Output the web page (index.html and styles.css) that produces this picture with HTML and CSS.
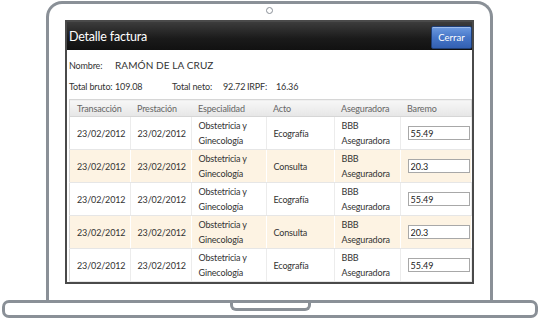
FILE: index.html
```html
<!DOCTYPE html>
<html lang="es">
<head>
  <meta charset="UTF-8" />
  <title>Detalle factura</title>
  <link rel="stylesheet" href="styles.css">
</head>
<body>

<div class="laptop">
  <div class="lid">
    <div class="camera"></div>
    <div class="screen">
      <header class="bar">
        <h1>Detalle factura</h1>
        <button class="close-btn">Cerrar</button>
      </header>

      <div class="content">
        <div class="info">
          <span class="label w44">Nombre:</span><span class="name">RAMÓN DE LA CRUZ</span>
        </div>
        <div class="info">
          <span class="label w44">Total bruto:</span><span class="w59">109.08</span>
          <span class="label w51">Total neto:</span><span class="w24">92.72</span>
          <span class="label w29">IRPF:</span><span>16.36</span>
        </div>

        <table class="grid">
          <thead>
            <tr>
              <th class="c1">Transacción</th>
              <th class="c2">Prestación</th>
              <th class="c3">Especialidad</th>
              <th class="c4">Acto</th>
              <th class="c5">Aseguradora</th>
              <th class="c6">Baremo</th>
            </tr>
          </thead>
          <tbody>
            <tr>
              <td>23/02/2012</td><td>23/02/2012</td><td>Obstetricia y<br>Ginecología</td>
              <td>Ecografía</td><td>BBB<br>Aseguradora</td><td><input value="55.49"></td>
            </tr>
            <tr class="alt">
              <td>23/02/2012</td><td>23/02/2012</td><td>Obstetricia y<br>Ginecología</td>
              <td>Consulta</td><td>BBB<br>Aseguradora</td><td><input value="20.3"></td>
            </tr>
            <tr>
              <td>23/02/2012</td><td>23/02/2012</td><td>Obstetricia y<br>Ginecología</td>
              <td>Ecografía</td><td>BBB<br>Aseguradora</td><td><input value="55.49"></td>
            </tr>
            <tr class="alt">
              <td>23/02/2012</td><td>23/02/2012</td><td>Obstetricia y<br>Ginecología</td>
              <td>Consulta</td><td>BBB<br>Aseguradora</td><td><input value="20.3"></td>
            </tr>
            <tr>
              <td>23/02/2012</td><td>23/02/2012</td><td>Obstetricia y<br>Ginecología</td>
              <td>Ecografía</td><td>BBB<br>Aseguradora</td><td><input value="55.49"></td>
            </tr>
          </tbody>
        </table>
      </div>
    </div>
  </div>
  <div class="base">
    <div class="notch"></div>
  </div>
</div>

</body>
</html>
```

FILE: styles.css
```css
body {
  font-family: Lato, "Open Sans", sans-serif;
  background: #fff;
  color: #333;
  margin: 0;
}
.laptop {
  width: 540px;
  height: 320px;
  padding-top: 1px;
  box-sizing: border-box;
}
.lid {
  width: 447px;
  margin-left: 46px;
  box-sizing: border-box;
  border: 3px solid #8a9097;
  border-bottom: none;
  border-radius: 16px 16px 0 0;
  padding: 0 16px 16px;
}
.camera {
  width: 5px;
  height: 5px;
  border: 1px solid #8a9097;
  border-radius: 50%;
  margin: 3px auto 6px;
}
.screen {
  height: 264px;
  box-sizing: border-box;
  border: 2px solid #4a4a4a;
  background: #fff;
  overflow: hidden;
}
.bar {
  display: flex;
  justify-content: space-between;
  align-items: center;
  height: 28px;
  padding: 0 0 0 2px;
  background: linear-gradient(#3c3c3c, #1a1a1a 60%, #111);
}
.bar h1 {
  margin: 0;
  font-size: 12.5px;
  font-weight: normal;
  letter-spacing: -0.2px;
  color: #fff;
}
.close-btn {
  width: 41px;
  height: 23px;
  margin-top: 2px;
  padding: 0;
  font-family: inherit;
  font-size: 9.5px;
  color: #fff;
  border: 1px solid #1f3f77;
  border-radius: 2px;
  background: linear-gradient(#6d9be0, #4676c8 50%, #3360b2);
  box-shadow: inset 0 1px 0 rgba(255,255,255,0.35);
}
.content {
  padding: 7px 2px 0 2px;
  font-size: 9px;
  letter-spacing: -0.15px;
}
.info {
  display: flex;
  align-items: center;
  height: 16px;
  margin-bottom: 5px;
}
.info span {
  flex-shrink: 0;
}
.name {
  font-size: 10px;
  letter-spacing: 0.1px;
}
.w44 { width: 46px; }
.w59 { width: 57px; }
.w51 { width: 51px; }
.w24 { width: 24px; }
.w29 { width: 29px; }
.grid {
  width: 403px;
  margin-top: 2px;
  border-collapse: collapse;
  border: 1px solid #d6d6d6;
  table-layout: fixed;
}
.grid th {
  height: 16px;
  padding: 0 0 0 7px;
  text-align: left;
  font-weight: normal;
  color: #666;
  background: linear-gradient(#f7f7f7, #e6e6e6);
  border-bottom: 1px solid #d6d6d6;
}
.grid td {
  height: 32px;
  padding: 0 0 0 7px;
  line-height: 15px;
  color: #333;
  border-right: 1px solid #ececec;
  border-bottom: 1px solid #e6e6e6;
}
.grid tr.alt td {
  background: #fdf3e3;
  border-right-color: #fff;
}
.c1 { width: 53px; }
.c2 { width: 54px; }
.c3 { width: 68px; }
.c4 { width: 61px; }
.c5 { width: 59px; }
.grid input {
  width: 62px;
  height: 14px;
  box-sizing: border-box;
  padding: 0 2px;
  font-family: inherit;
  font-size: 9px;
  color: #222;
  border: 1px solid #a8a8a8;
  background: #fff;
}
.base {
  width: 536px;
  height: 18px;
  margin-left: 2px;
  box-sizing: border-box;
  border: 3px solid #8a9097;
  border-radius: 7px;
}
.notch {
  width: 75px;
  height: 5px;
  margin: 0 auto;
  border: 3px solid #8a9097;
  border-top: none;
  border-radius: 0 0 6px 6px;
}
```
